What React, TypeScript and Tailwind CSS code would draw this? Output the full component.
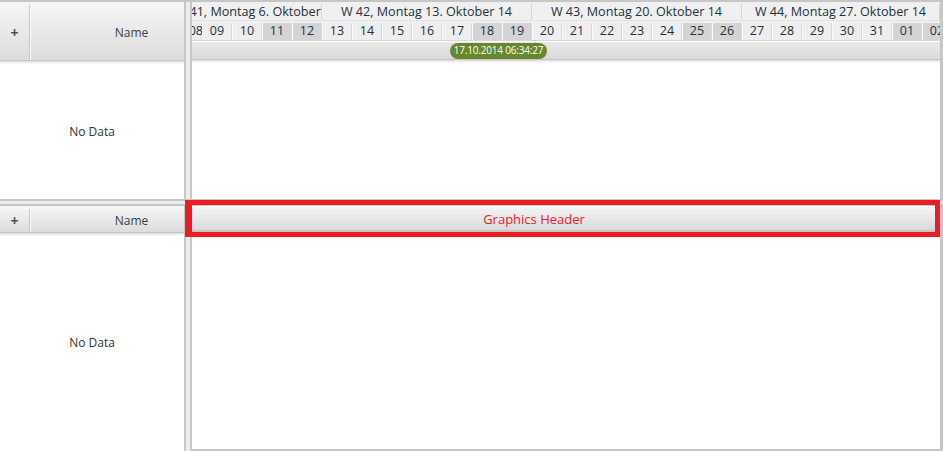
import React from 'react';

const days = ['08', '09', '10', '11', '12', '13', '14', '15', '16', '17', '18', '19', '20', '21', '22', '23', '24', '25', '26', '27', '28', '29', '30', '31', '01', '02'];
const weekend = new Set(['11', '12', '18', '19', '25', '26', '01', '02']);

const weeks = [
  { label: 'W 41, Montag 6. Oktober 14', w: 'w-[130px]' },
  { label: 'W 42, Montag 13. Oktober 14', w: 'w-[210px]' },
  { label: 'W 43, Montag 20. Oktober 14', w: 'w-[210px]' },
  { label: 'W 44, Montag 27. Oktober 14', w: 'flex-1' },
];

// Left grid header: "+" column and Name column
const GridHeader: React.FC<{ height: string }> = ({ height }) => (
  <div className="shrink-0">
    <div className={`flex ${height} pt-[3px] bg-gradient-to-b from-[#f6f6f6] to-[#dcdcdc] border-b border-[#c4c4c4]`}>
      <div className="w-[30px] flex items-center justify-center border-r border-[#c8c8c8] text-[#505050] text-[14px] font-bold">+</div>
      <div className="flex-1 flex items-center justify-center pl-[48px] border-l border-[#f8f8f8] text-[12px] text-[#3c3c3c]">Name</div>
    </div>
    <div className="h-[3px] bg-gradient-to-b from-[#dcdcdc] to-white" />
  </div>
);

const Splitter: React.FC = () => (
  <div className="w-[8px] shrink-0 border-x-2 border-[#c6c6c6] bg-[#ececec]" />
);

const App: React.FC = () => {
  return (
    <div className="relative w-[943px] h-[451px] flex flex-col bg-white overflow-hidden border-t-2 border-[#c6c6c6] font-['Open_Sans','Liberation_Sans',sans-serif]">
      {/* Top panel */}
      <div className="h-[197px] flex shrink-0">
        <div className="w-[184px] flex flex-col">
          <GridHeader height="h-[59px]" />
          <div className="flex-1 flex items-center justify-center text-[12px] text-[#333]">No Data</div>
        </div>
        <Splitter />
        <div className="flex-1 flex flex-col border-r-[3px] border-[#c6c6c6] min-w-0">
          {/* Week row */}
          <div className="h-[19px] pt-[2px] flex bg-[#f0f0f0] border-b border-[#e2e2e2] text-[12.6px] text-[#23303c]">
            {weeks.map((wk) => (
              <div key={wk.label} className={`${wk.w} shrink-0 flex items-center justify-center overflow-hidden whitespace-nowrap border-r border-[#d6d6d6]`}>
                <span className="shrink-0">{wk.label}</span>
              </div>
            ))}
          </div>
          {/* Day row */}
          <div className="h-[20px] pt-[2px] flex overflow-hidden bg-[#f0f0f0] border-b border-[#d8d8d8] text-[12.5px] text-[#23303c]">
            <div className="flex ml-[-20px] shrink-0">
              {days.map((d, i) => (
                <div
                  key={d}
                  className={`w-[30px] shrink-0 flex items-center border-r border-[#dadada] border-l border-l-[#fafafa] ${i === 0 ? 'justify-end pr-0' : 'justify-center'} ${weekend.has(d) ? 'bg-[#d4d4d4]' : 'bg-[#eeeeee]'}`}
                >
                  <span className={i === 0 ? 'mr-[-2px]' : ''}>{d}</span>
                </div>
              ))}
            </div>
          </div>
          {/* Time marker row */}
          <div className="h-[19px] flex items-center pl-[258px] bg-gradient-to-b from-[#e8e8e8] to-[#dadada] border-t border-white border-b border-b-[#c4c4c4]">
            <span className="h-[16px] w-[97px] flex items-center justify-center rounded-full bg-[#66882a] text-white text-[10px] tracking-[-0.2px]">17.10.2014 06:34:27</span>
          </div>
          <div className="h-[3px] bg-gradient-to-b from-[#dcdcdc] to-white" />
          <div className="flex-1 bg-white" />
        </div>
      </div>

      {/* Horizontal splitter */}
      <div className="h-[7px] shrink-0 border-y-2 border-[#c6c6c6] bg-[#ececec]" />

      {/* Bottom panel */}
      <div className="flex-1 flex min-h-0">
        <div className="w-[184px] flex flex-col">
          <GridHeader height="h-[27px]" />
          <div className="flex-1 flex items-center justify-center text-[12px] text-[#333] pb-[2px]">No Data</div>
        </div>
        <Splitter />
        <div className="flex-1 flex flex-col border-r-[3px] border-[#c6c6c6] border-b-2 border-b-[#c6c6c6] min-w-0">
          <div className="h-[26px] mr-[2px] pt-[2px] flex items-center justify-center pr-[62px] bg-gradient-to-b from-[#f4f4f4] to-[#dadada] border-t border-white border-b-2 border-b-[#c4c4c4] text-[13px] text-[#e3242b]">
            Graphics Header
          </div>
          <div className="flex-1 bg-white" />
        </div>
      </div>

      {/* Red annotation frame */}
      <div className="absolute left-[185px] top-[198px] w-[755px] h-[37px] border-[5px] border-l-[7px] border-[#ed1c24] pointer-events-none" />
    </div>
  );
};

export default App;
